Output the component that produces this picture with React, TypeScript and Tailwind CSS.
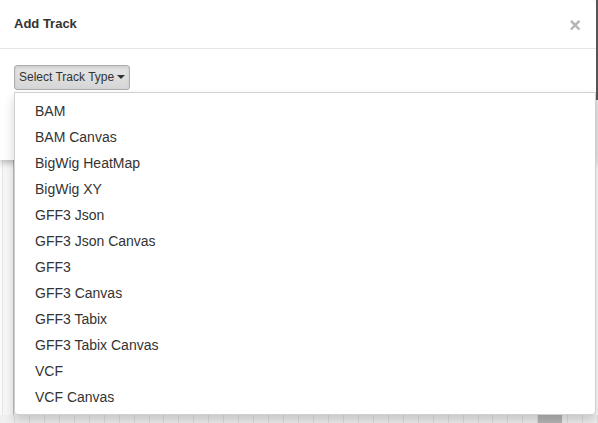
import React from "react";

const items = [
  "BAM",
  "BAM Canvas",
  "BigWig HeatMap",
  "BigWig XY",
  "GFF3 Json",
  "GFF3 Json Canvas",
  "GFF3",
  "GFF3 Canvas",
  "GFF3 Tabix",
  "GFF3 Tabix Canvas",
  "VCF",
  "VCF Canvas",
];

export default function App() {
  return (
    <div
      className="relative w-[598px] h-[423px] overflow-hidden bg-white text-[#333]"
      style={{ fontFamily: '"Liberation Sans", Arial, sans-serif' }}
    >
      {/* background behind modal */}
      <div className="absolute left-0 top-[160px] w-[598px] h-[263px] bg-[#fbfbfb] flex">
        <div className="w-[2px]" />
        <div className="w-[1px] bg-[#e4e4e4]" />
        <div className="w-[10px] bg-[#f7f7f7]" />
        <div className="w-[1px] bg-[#bdbdbd]" />
      </div>
      <div className="absolute left-0 top-[415px] w-[598px] h-[8px] bg-[#f0f0f0] flex">
        {Array.from({ length: 40 }).map((_, i) => (
          <div key={i} className="w-[15px] h-full border-r border-[#dedede]" />
        ))}
      </div>
      <div className="absolute left-[538px] top-[415px] w-[24px] h-[8px] bg-[#b8b8b8]" />

      {/* modal */}
      <div className="absolute left-0 top-0 w-[596px] h-[160px] bg-white rounded-tr-[6px] shadow-[0_3px_6px_rgba(0,0,0,0.25)]">
        <div className="h-[49px] border-b border-[#e5e5e5] flex items-center justify-between pl-[14px] pr-[15px]">
          <span className="text-[13px] font-bold text-[#333]">Add Track</span>
          <span className="text-[#b4b4b4] text-[20px] font-bold leading-none mt-[2px]">×</span>
        </div>
        <div className="px-[14px] pt-[15px]">
          <div className="inline-flex items-center whitespace-nowrap h-[25px] pl-[4px] pr-[4px] text-[12px] text-[#333] border border-[#adadad] rounded-[3px] bg-gradient-to-b from-[#e6e6e6] to-[#d6d6d6] shadow-[inset_0_2px_3px_rgba(0,0,0,0.1)]">
            Select Track Type
            <span className="ml-[3px] inline-block w-0 h-0 border-l-[4px] border-r-[4px] border-t-[4px] border-l-transparent border-r-transparent border-t-[#333]" />
          </div>
        </div>
      </div>
      <div className="absolute left-[596px] top-0 w-[2px] h-[100px] bg-[#555]" />

      {/* dropdown */}
      <div className="absolute left-[14px] top-[92px] w-[582px] h-[323px] bg-white border border-[#d0d0d0] rounded-b-[4px] shadow-[0_6px_12px_rgba(0,0,0,0.175)] pt-[5px]">
        {items.map((t) => (
          <div key={t} className="h-[26px] flex items-center pl-[20px] text-[14px] text-[#333]">
            {t}
          </div>
        ))}
      </div>
    </div>
  );
}
